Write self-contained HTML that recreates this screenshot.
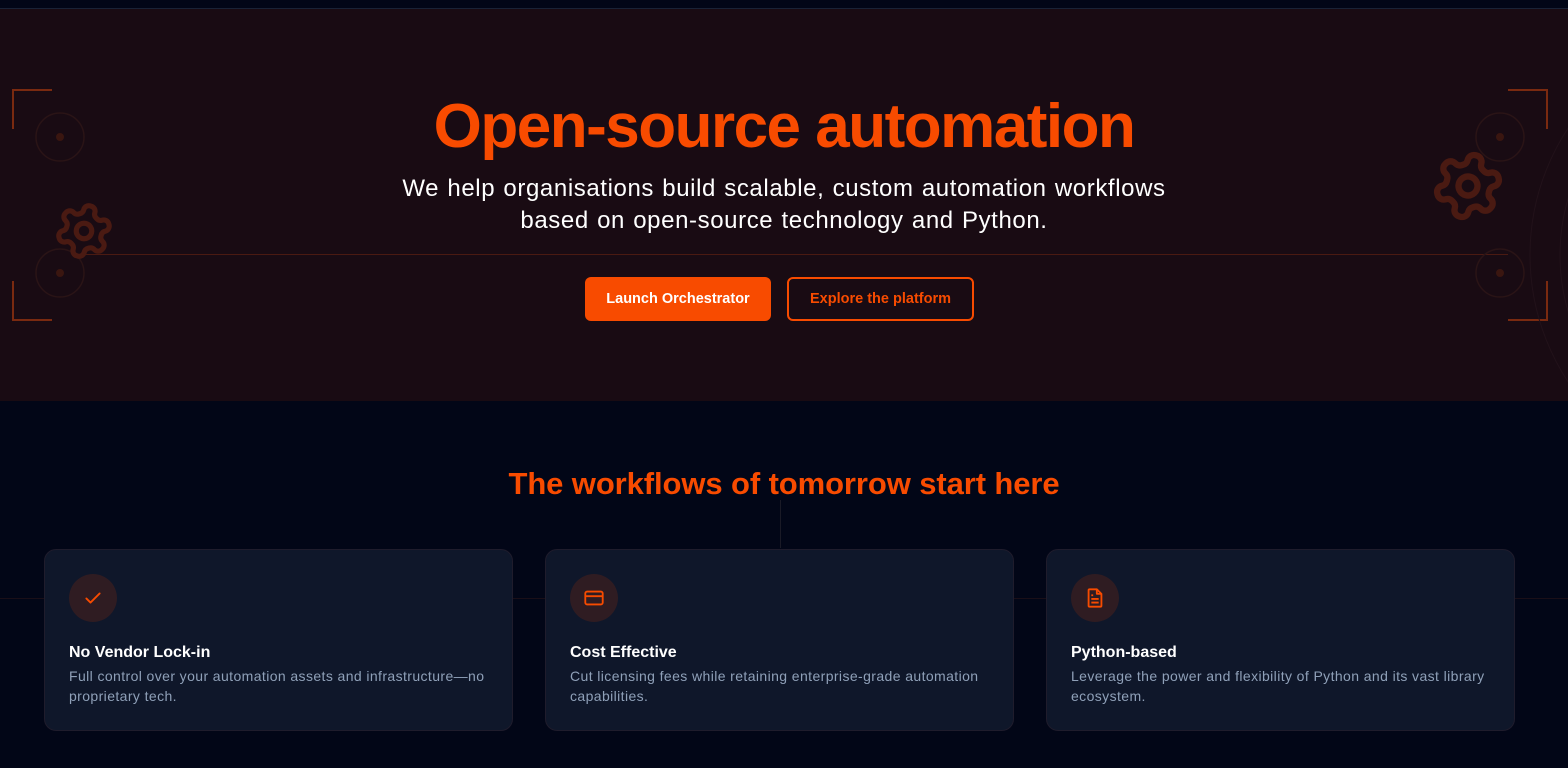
<!DOCTYPE html>
<html><head><meta charset="utf-8"><style>
*{margin:0;padding:0;box-sizing:border-box}
body{width:1568px;height:768px;overflow:hidden;background:#020617;font-family:"Liberation Sans",sans-serif;position:relative}
.top{position:absolute;left:0;top:0;width:100%;height:9px;background:#020617;border-bottom:1px solid #1a2236}
.hero{position:absolute;left:0;top:9px;width:100%;height:392px;background:#190b13;overflow:hidden}
.hline{position:absolute;left:85px;right:60px;top:245px;height:1px;background:#4a1a12}
h1{position:absolute;top:82px;width:100%;text-align:center;color:#f84b00;font-size:62px;font-weight:bold;letter-spacing:-1.5px}
.sub{position:absolute;top:164px;width:100%;text-align:center;color:#fff;font-size:24px;line-height:32px;letter-spacing:0.6px;word-spacing:1px}
.btn{position:absolute;top:268px;height:44px;border-radius:6px;font-size:14.5px;font-weight:bold;display:flex;align-items:center;justify-content:center}
.b1{left:585px;width:186px;background:#f84b00;color:#fff}
.b2{left:787px;width:187px;border:2px solid #f84b00;color:#f84b00}
.cor{position:absolute;width:40px;height:40px;border-color:#7a2a10;border-style:solid;border-width:0}
h2{position:absolute;top:466px;width:100%;text-align:center;color:#f84b00;font-size:31px;font-weight:bold;letter-spacing:-0.1px}
.card{position:absolute;top:549px;width:469px;height:182px;background:#0f172a;border:1px solid #1f1c2c;border-radius:12px}
.ic{position:absolute;left:24px;top:24px;width:48px;height:48px;border-radius:50%;background:#2f1c22;display:flex;align-items:center;justify-content:center}
.ct{position:absolute;left:24px;top:94px;color:#fff;font-size:16px;font-weight:bold}
.cd{position:absolute;left:24px;top:116px;right:20px;color:#8fa0b8;font-size:14px;line-height:20px;letter-spacing:0.4px}
</style></head><body>
<div class="top"></div>
<div class="hero">
<div class="hline"></div>
<div class="cor" style="left:12px;top:80px;border-left-width:2px;border-top-width:2px"></div>
<div class="cor" style="left:12px;top:272px;border-left-width:2px;border-bottom-width:2px"></div>
<div class="cor" style="right:20px;top:80px;border-right-width:2px;border-top-width:2px"></div>
<div class="cor" style="right:20px;top:272px;border-right-width:2px;border-bottom-width:2px"></div>
<svg style="position:absolute;left:0;top:0" width="1568" height="392">
<defs><symbol id="g" viewBox="0 0 24 24"><path d="M12.22 2h-.44a2 2 0 0 0-2 2v.18a2 2 0 0 1-1 1.73l-.43.25a2 2 0 0 1-2 0l-.15-.08a2 2 0 0 0-2.73.73l-.22.38a2 2 0 0 0 .73 2.73l.15.1a2 2 0 0 1 1 1.72v.51a2 2 0 0 1-1 1.74l-.15.09a2 2 0 0 0-.73 2.73l.22.38a2 2 0 0 0 2.730.73l.15-.08a2 2 0 0 1 2 0l.43.25a2 2 0 0 1 1 1.73V20a2 2 0 0 0 2 2h.44a2 2 0 0 0 2-2v-.18a2 2 0 0 1 1-1.73l.43-.25a2 2 0 0 1 2 0l.15.08a2 2 0 0 0 2.73-.73l.22-.39a2 2 0 0 0-.73-2.73l-.15-.08a2 2 0 0 1-1-1.740v-.5a2 2 0 0 1 1-1.74l.15-.09a2 2 0 0 0 .73-2.73l-.22-.38a2 2 0 0 0-2.73-.73l-.15.08a2 2 0 0 1-2 0l-.43-.25a2 2 0 0 1-1-1.73V4a2 2 0 0 0-2-2z" fill="none" stroke="#4a1a12" stroke-width="2" stroke-linejoin="round"/><circle cx="12" cy="12" r="3" fill="none" stroke="#4a1a12" stroke-width="2"/></symbol></defs>
<g fill="none" stroke="#2a1416" stroke-width="1.5"><circle cx="60" cy="128" r="24"/><circle cx="60" cy="264" r="24"/><circle cx="1500" cy="128" r="24"/><circle cx="1500" cy="264" r="24"/></g>
<g fill="none" stroke="#22121a" stroke-width="1"><circle cx="1760" cy="246" r="230"/><circle cx="1760" cy="246" r="200"/></g>
<g fill="#3a1610"><circle cx="60" cy="128" r="4"/><circle cx="60" cy="264" r="4"/><circle cx="1500" cy="128" r="4"/><circle cx="1500" cy="264" r="4"/></g>
<use href="#g" x="53" y="191" width="62" height="62" transform="rotate(15 84 222)"/>
<use href="#g" x="1430" y="139" width="76" height="76" transform="rotate(15 1468 177)"/>
</svg>
<h1>Open-source automation</h1>
<div class="sub">We help organisations build scalable, custom automation workflows<br>based on open-source technology and Python.</div>
<div class="btn b1">Launch Orchestrator</div>
<div class="btn b2">Explore the platform</div>
</div>
<div style="position:absolute;left:0;right:0;top:598px;height:1px;background:#1a0f18"></div>
<div style="position:absolute;left:780px;top:500px;width:1px;height:48px;background:#1a1a26"></div>
<h2>The workflows of tomorrow start here</h2>
<div class="card" style="left:44px"><div class="ic"><svg width="20" height="20" viewBox="0 0 24 24" fill="none" stroke="#f84b00" stroke-width="2.2" stroke-linecap="round" stroke-linejoin="round"><path d="M4 12.5l5 5L20 6.5"/></svg></div><div class="ct">No Vendor Lock-in</div><div class="cd">Full control over your automation assets and infrastructure—no proprietary tech.</div></div>
<div class="card" style="left:545px"><div class="ic"><svg width="22" height="22" viewBox="0 0 24 24" fill="none" stroke="#f84b00" stroke-width="2"><rect x="2.5" y="5" width="19" height="14" rx="2"/><path d="M2.5 10h19"/></svg></div><div class="ct">Cost Effective</div><div class="cd">Cut licensing fees while retaining enterprise-grade automation capabilities.</div></div>
<div class="card" style="left:1046px"><div class="ic"><svg width="22" height="22" viewBox="0 0 24 24" fill="none" stroke="#f84b00" stroke-width="2" stroke-linejoin="round"><path d="M6 2.5h8l5 5v13a1 1 0 0 1-1 1H6a1 1 0 0 1-1-1v-17a1 1 0 0 1 1-1z"/><path d="M14 2.5v5h5M8 9h2M8 13h8M8 17h8"/></svg></div><div class="ct">Python-based</div><div class="cd">Leverage the power and flexibility of Python and its vast library ecosystem.</div></div>
</body></html>
